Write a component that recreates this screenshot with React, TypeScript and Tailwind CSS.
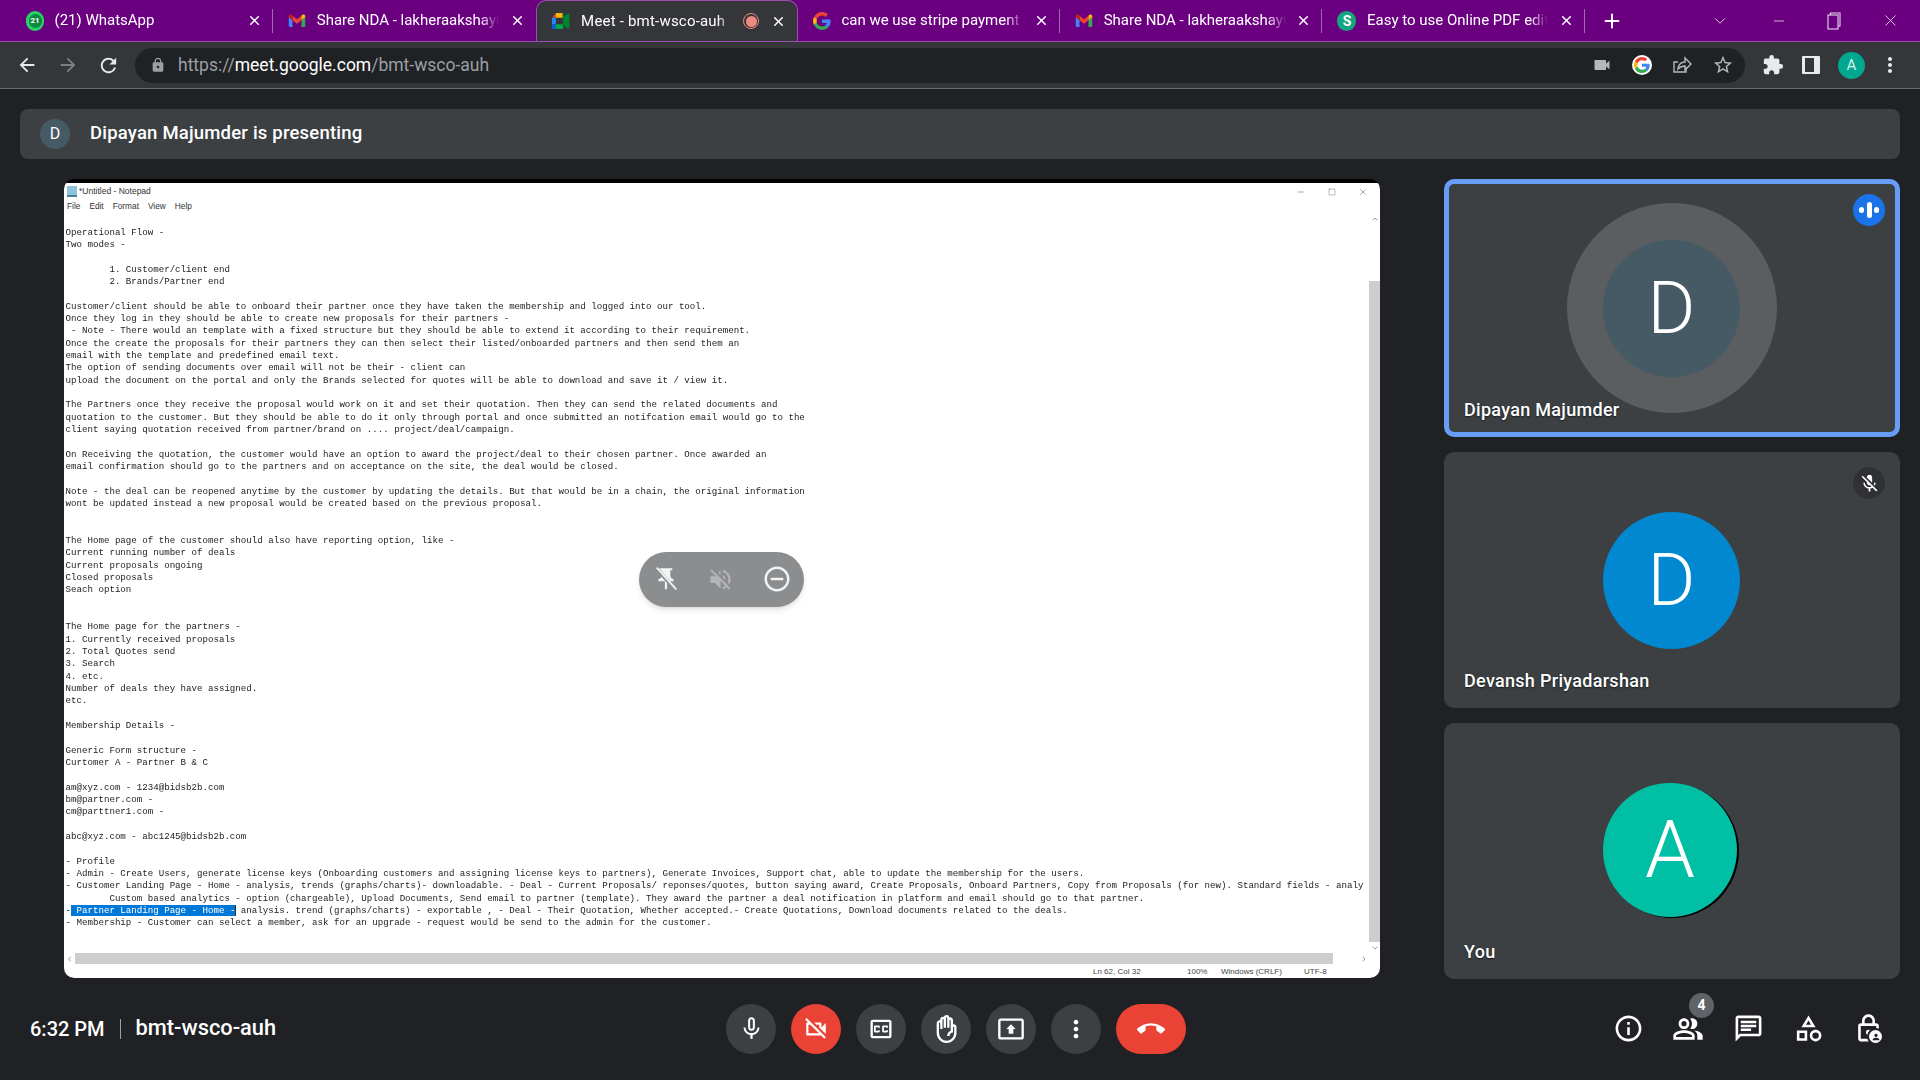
import React from 'react';
import { Minus, Plus, Square, X, ChevronDown, ChevronUp, ChevronLeft, ChevronRight } from 'lucide-react';
import {
  MdArrowBack, MdArrowForward, MdRefresh, MdLock, MdVideocam, MdStarBorder, MdExtension, MdMoreVert,
  MdVolumeOff, MdRemoveCircleOutline, MdMicOff, MdMicNone, MdOutlineVideocamOff, MdOutlineClosedCaption,
  MdOutlineFrontHand, MdOutlinePresentToAll, MdCallEnd, MdInfoOutline, MdOutlinePeopleAlt, MdOutlineChat,
  MdOutlineCategory, MdOutlineLock, MdPerson,
} from 'react-icons/md';

const ui = 'font-["Roboto",sans-serif]';

const GoogleG = ({ size = 18 }: { size?: number }) => (
  <svg width={size} height={size} viewBox="0 0 48 48" className="shrink-0">
    <path fill="#EA4335" d="M24 9.5c3.5 0 6.6 1.2 9.1 3.6l6.8-6.8C35.8 2.4 30.4 0 24 0 14.6 0 6.5 5.4 2.6 13.2l7.9 6.2C12.4 13.7 17.7 9.5 24 9.5z" />
    <path fill="#4285F4" d="M47 24.5c0-1.6-.1-3.100-.4-4.500H24v9h12.900c-.6 3-2.200 5.500-4.700 7.200l7.600 5.900C44.300 37.500 47 31.500 47 24.500z" />
    <path fill="#FBBC05" d="M10.500 28.600c-.5-1.400-.8-3-.8-4.600s.3-3.200.8-4.600l-7.900-6.200C.9 16.500 0 20.100 0 24s.9 7.500 2.600 10.800l7.900-6.200z" />
    <path fill="#34A853" d="M24 48c6.500 0 11.900-2.100 15.800-5.800l-7.600-5.900c-2.100 1.400-4.900 2.300-8.200 2.300-6.300 0-11.600-4.200-13.500-9.900l-7.900 6.200C6.500 42.600 14.600 48 24 48z" />
  </svg>
);

const GmailIcon = () => (
  <svg width="18" height="18" viewBox="0 0 24 24" className="shrink-0">
    <path fill="#4285F4" d="M2 20h4V11L1 7v11a2 2 0 0 0 1 2z" />
    <path fill="#34A853" d="M18 20h4a2 2 0 0 0 1-2V7l-5 4z" />
    <path fill="#EA4335" d="M6 11V5l6 4.500L18 5v6l-6 4.500z" />
    <path fill="#FBBC05" d="M18 5v6l5-4V5.500C23 3.500 20.500 2.500 19 3.700z" />
    <path fill="#C5221F" d="M1 7l5 4V5L5 3.700C3.500 2.500 1 3.500 1 5.500z" />
  </svg>
);

const MeetIcon = () => (
  <svg width="19" height="18" viewBox="0 0 24 22" className="shrink-0">
    <path fill="#EA4335" d="M5 1h9v6H0z" />
    <path fill="#2684FC" d="M0 7h5v8H0z" />
    <path fill="#0066DA" d="M0 15h5v6H2a2 2 0 0 1-2-2z" />
    <path fill="#FFBA00" d="M5 1h9v6H5z" />
    <path fill="#00AC47" d="M5 15h9v6H5z" />
    <path fill="#00832D" d="M14 6l5-4c1-.6 3-.5 3 1v16c0 1.500-2 1.600-3 1l-5-4z" />
    <path fill="#00AC47" d="M14 1v20h-1V1z" />
    <path fill="#35363a" d="M5 7h9v8H5z" />
  </svg>
);

const WhatsAppIcon = () => (
  <div className="w-[18px] h-[20px] rounded-full bg-[#25d366] flex items-center justify-center shrink-0">
    <span className="w-[13px] h-[14px] rounded-full bg-[#0b8a3e] text-white text-[8px] font-bold leading-[14px] text-center">21</span>
  </div>
);

const SmallpdfIcon = () => (
  <div className="w-[19px] h-[20px] rounded-full bg-[#13a67f] text-white text-[14px] leading-[20px] font-bold flex items-center justify-center shrink-0">S</div>
);

interface TabInfo {
  title: string;
  icon: React.ReactNode;
  active?: boolean;
  divider?: boolean;
}

const tabs: TabInfo[] = [
  { title: '(21) WhatsApp', icon: <WhatsAppIcon />, divider: true },
  { title: 'Share NDA - lakheraakshay0', icon: <GmailIcon /> },
  { title: 'Meet - bmt-wsco-auh', icon: <MeetIcon />, active: true },
  { title: 'can we use stripe payment o', icon: <GoogleG />, divider: true },
  { title: 'Share NDA - lakheraakshay0', icon: <GmailIcon />, divider: true },
  { title: 'Easy to use Online PDF edito', icon: <SmallpdfIcon />, divider: true },
];

const Tab = ({ tab }: { tab: TabInfo }) => (
  <div
    className={`relative w-[262.3px] h-[41px] shrink-0 flex items-center pl-[15px] pr-[11px] gap-[10.5px] text-white ${
      tab.active ? 'bg-[#35363a] rounded-t-[10px] border border-b-0 border-[#9c4fb0]' : ''
    }`}
  >
    {tab.icon}
    <span className={`flex-1 min-w-0 overflow-hidden whitespace-nowrap text-[15px] [mask-image:linear-gradient(to_right,black_90%,transparent)] ${tab.active ? 'tracking-[0.2px]' : ''}`}>
      {tab.title}
    </span>
    {tab.active && (
      <span className="w-[16px] h-[16px] rounded-full border border-[#f28b82] flex items-center justify-center shrink-0 mr-[1px]">
        <span className="w-[11px] h-[11px] rounded-full bg-[#ee8b80]" />
      </span>
    )}
    <X size={15} strokeWidth={2.4} className="shrink-0" />
    {tab.divider && <span className="absolute right-0 top-[9px] h-[24px] w-px bg-[#9d6bab]" />}
  </div>
);

const RestoreIcon = () => (
  <svg width="14" height="18" viewBox="0 0 14 18" fill="none" stroke="#e8d9ec" strokeWidth="1.100">
    <rect x="1" y="3" width="10" height="14" />
    <path d="M3.500 3V1H13v13h-2" />
  </svg>
);

const TabStrip = () => (
  <div className={`${ui} h-[42px] bg-[#6a0080] border-b border-[#9c4fb0] flex items-end pl-[11px] text-white`}>
    {tabs.map((t, i) => (
      <Tab key={i} tab={t} />
    ))}
    <div className="w-[54px] h-[41px] flex items-center justify-center">
      <Plus size={22} strokeWidth={2.2} />
    </div>
    <div className="flex-1 h-[41px] flex items-center justify-end pr-[20px] gap-[40px] text-[#e8d9ec]">
      <ChevronDown size={18} strokeWidth={1.2} className="mr-[2px]" />
      <Minus size={16} strokeWidth={1.2} />
      <RestoreIcon />
      <X size={19} strokeWidth={1.1} />
    </div>
  </div>
);

const ChromeShare = () => (
  <svg width="20" height="22" viewBox="0 0 20 22" fill="none" stroke="#b5b7ba" strokeWidth="1.4">
    <path d="M14 13v5H2V8h4" />
    <path d="M6 15c.5-4 3-7 7-7V4l6 6-6 6v-4c-3 0-5 1-7 3z" />
  </svg>
);

const Toolbar = () => (
  <div className={`${ui} h-[47px] bg-[#35363a] border-b border-[#6b6c70] flex items-center`}>
    <div className="w-[135px] flex items-center pl-[16px] gap-[19px] shrink-0">
      <MdArrowBack size={22} className="text-[#e8eaed]" />
      <MdArrowForward size={22} className="text-[#7d7f83]" />
      <MdRefresh size={23} className="text-[#e8eaed] -ml-[1px]" />
    </div>
    <div className="w-[1610px] h-[35px] rounded-full bg-[#202124] flex items-center pl-[15px] pr-[11px]">
      <MdLock size={16} className="text-[#9aa0a6]" />
      <span className="ml-[12px] text-[17.5px] text-[#9aa0a6] whitespace-nowrap">
        https://<span className="text-white">meet.google.com</span>/bmt-wsco-auh
      </span>
      <div className="ml-auto flex items-center gap-[20px]">
        <MdVideocam size={20} className="text-[#b5b7ba]" />
        <div className="w-[20px] h-[20px] rounded-full bg-white flex items-center justify-center">
          <GoogleG size={16} />
        </div>
        <ChromeShare />
        <MdStarBorder size={22} className="text-[#b5b7ba]" />
      </div>
    </div>
    <div className="flex-1 flex items-center pl-[17px] gap-[18px]">
      <MdExtension size={22} className="text-[#e8eaed]" />
      <div className="w-[18px] h-[18px] border-[2px] border-[#e8eaed] border-r-[6px] border-l-[3px] rounded-[1px]" />
      <div className="w-[27px] h-[27px] rounded-full bg-[#00a88f] text-[#d7f3ee] text-[15px] flex items-center justify-center">A</div>
      <MdMoreVert size={24} className="text-[#e8eaed] -ml-[5px]" />
    </div>
  </div>
);

const notepadLines = [
  'Operational Flow -',
  'Two modes -',
  '',
  '\t1. Customer/client end',
  '\t2. Brands/Partner end',
  '',
  'Customer/client should be able to onboard their partner once they have taken the membership and logged into our tool.',
  'Once they log in they should be able to create new proposals for their partners -',
  ' - Note - There would an template with a fixed structure but they should be able to extend it according to their requirement.',
  'Once the create the proposals for their partners they can then select their listed/onboarded partners and then send them an',
  'email with the template and predefined email text.',
  'The option of sending documents over email will not be their - client can',
  'upload the document on the portal and only the Brands selected for quotes will be able to download and save it / view it.',
  '',
  'The Partners once they receive the proposal would work on it and set their quotation. Then they can send the related documents and',
  'quotation to the customer. But they should be able to do it only through portal and once submitted an notifcation email would go to the',
  'client saying quotation received from partner/brand on .... project/deal/campaign.',
  '',
  'On Receiving the quotation, the customer would have an option to award the project/deal to their chosen partner. Once awarded an',
  'email confirmation should go to the partners and on acceptance on the site, the deal would be closed.',
  '',
  'Note - the deal can be reopened anytime by the customer by updating the details. But that would be in a chain, the original information',
  'wont be updated instead a new proposal would be created based on the previous proposal.',
  '',
  '',
  'The Home page of the customer should also have reporting option, like -',
  'Current running number of deals',
  'Current proposals ongoing',
  'Closed proposals',
  'Seach option',
  '',
  '',
  'The Home page for the partners -',
  '1. Currently received proposals',
  '2. Total Quotes send',
  '3. Search',
  '4. etc.',
  'Number of deals they have assigned.',
  'etc.',
  '',
  'Membership Details -',
  '',
  'Generic Form structure -',
  'Curtomer A - Partner B & C',
  '',
  'am@xyz.com - 1234@bidsb2b.com',
  'bm@partner.com -',
  'cm@parttner1.com -',
  '',
  'abc@xyz.com - abc1245@bidsb2b.com',
  '',
  '- Profile',
  '- Admin - Create Users, generate license keys (Onboarding customers and assigning license keys to partners), Generate Invoices, Support chat, able to update the membership for the users.',
  '- Customer Landing Page - Home - analysis, trends (graphs/charts)- downloadable. - Deal - Current Proposals/ reponses/quotes, button saying award, Create Proposals, Onboard Partners, Copy from Proposals (for new). Standard fields - analy',
  '\tCustom based analytics - option (chargeable), Upload Documents, Send email to partner (template). They award the partner a deal notification in platform and email should go to that partner.',
];

const NotepadWindow = () => (
  <div className="w-[1316px] bg-black pt-[4px] rounded-[10px] overflow-hidden">
    <div className="h-[795px] bg-white flex flex-col font-['Liberation_Sans',sans-serif] text-[#333]">
      <div className="h-[16px] flex items-center pl-[3px] pt-[1px] text-[8.5px] shrink-0">
        <span className="w-[10px] h-[11px] bg-[#8fc3dc] border-b-2 border-[#4f7f9a] mr-[2px]" />
        <span>*Untitled - Notepad</span>
        <div className="ml-auto flex items-center gap-[22px] pr-[12px] text-[#333]">
          <Minus size={10} strokeWidth={1} />
          <Square size={8} strokeWidth={1} />
          <X size={10} strokeWidth={1} />
        </div>
      </div>
      <div className="h-[14px] flex items-center pl-[3px] text-[8.3px] gap-[9px] shrink-0">
        <span>File</span>
        <span>Edit</span>
        <span>Format</span>
        <span>View</span>
        <span>Help</span>
      </div>
      <div className="flex-1 min-h-0 flex">
        <pre className="flex-1 min-w-0 overflow-hidden pl-[1.6px] pt-[13.8px] font-['Liberation_Mono',monospace] text-[9.15px] leading-[12.33px] [tab-size:8] text-[#222] blur-[0.3px]">
          {notepadLines.join('\n')}
          {'\n-'}
          <span className="bg-[#0078d7] text-white"> Partner Landing Page - Home -</span>
          <span className="inline-block w-px h-[11px] -mr-px bg-[#333] align-middle" />
          {' analysis. trend (graphs/charts) - exportable , - Deal - Their Quotation, Whether accepted.- Create Quotations, Download documents related to the deals.\n'}
          {'- Membership - Customer can select a member, ask for an upgrade - request would be send to the admin for the customer.'}
        </pre>
        <div className="w-[11px] shrink-0 flex flex-col items-center text-[#666]">
          <ChevronUp size={8} className="mt-[2px] mb-[58px] shrink-0" />
          <div className="w-full h-[661px] bg-[#cdcdcd] shrink-0" />
          <ChevronDown size={8} className="mt-[2px] shrink-0" />
        </div>
      </div>
      <div className="h-[11px] shrink-0 flex items-center text-[#666]">
        <ChevronLeft size={8} className="w-[11px] shrink-0" />
        <div className="w-[1258px] h-full bg-[#cdcdcd]" />
        <ChevronRight size={8} className="ml-[27px] shrink-0" />
      </div>
      <div className="h-[14px] pt-[2px] shrink-0 flex items-center text-[8px] text-[#444] whitespace-nowrap pl-[1029px]">
        <span className="w-[94px]">Ln 62, Col 32</span>
        <span className="w-[34px]">100%</span>
        <span className="w-[83px]">Windows (CRLF)</span>
        <span>UTF-8</span>
      </div>
    </div>
  </div>
);

const PinOff = () => (
  <svg width="26" height="26" viewBox="0 0 24 24" fill="#f1f3f4">
    <path d="M16 9V4h1c.55 0 1-.45 1-1s-.45-1-1-1H7c-.55 0-1 .45-1 1s.45 1 1 1h1v5c0 1.660-1.340 3-3 3v2h5.970v7l1 1 1-1v-7H19v-2c-1.660 0-3-1.340-3-3z" />
    <path d="M3 2l18 20" stroke="#8c8d8e" strokeWidth="3.500" />
    <path d="M3.500 1.500l18 20" stroke="#f1f3f4" strokeWidth="1.800" />
  </svg>
);

const PresentationControls = () => (
  <div className="absolute left-[575px] top-[372.5px] w-[165px] h-[55px] rounded-full bg-[#8c8d8e] shadow-md flex items-center pl-[14px] gap-[28px]">
    <PinOff />
    <MdVolumeOff size={27} className="text-[#b3b4b5]" />
    <MdRemoveCircleOutline size={30} className="text-[#f1f3f4]" />
  </div>
);

const SpeakingBadge = () => (
  <div className="absolute right-[10px] top-[10px] w-[32px] h-[32px] rounded-full bg-[#1a73e8] flex items-center justify-center gap-[2.5px]">
    <span className="w-[5px] h-[6px] rounded-full bg-white" />
    <span className="w-[5px] h-[16px] rounded-full bg-white" />
    <span className="w-[5px] h-[6px] rounded-full bg-white" />
  </div>
);

const MutedBadge = () => (
  <div className="absolute right-[15px] top-[15px] w-[32px] h-[32px] rounded-full bg-[#303134] flex items-center justify-center">
    <MdMicOff size={21} className="text-white" />
  </div>
);

const Tile = ({
  name,
  letter,
  avatarClass,
  height,
  speaking,
  muted,
  ringed,
}: {
  name: string;
  letter: string;
  avatarClass: string;
  height: string;
  speaking?: boolean;
  muted?: boolean;
  ringed?: boolean;
}) => (
  <div
    className={`relative ${height} rounded-[10px] bg-[#3c4043] flex items-center justify-center pr-[1px] ${
      speaking ? 'border-[5px] border-[#669df6]' : ''
    } ${ui}`}
  >
    {ringed && <div className="absolute left-1/2 top-1/2 w-[210px] h-[210px] -ml-[105px] -mt-[105px] rounded-full bg-[#5a5e61]" />}
    <div className={`relative rounded-full text-white font-light flex items-center justify-center ${avatarClass}`}>
      {letter}
    </div>
    {speaking && <SpeakingBadge />}
    {muted && <MutedBadge />}
    <span
      className={`absolute ${speaking ? 'left-[15px] bottom-[11px]' : 'left-[20px] bottom-[16px]'} text-white text-[18px] tracking-[0.3px] font-medium leading-[22px] [text-shadow:0_1px_2px_rgba(0,0,0,0.6)]`}
    >
      {name}
    </span>
  </div>
);

const Sidebar = () => (
  <div className="w-[456px] flex flex-col gap-[15px]">
    <Tile
      name="Dipayan Majumder"
      letter="D"
      avatarClass="w-[137px] h-[137px] bg-[#455a64] text-[73px] pt-[2px]"
      height="h-[258px]"
      speaking
      ringed
    />
    <Tile
      name="Devansh Priyadarshan"
      letter="D"
      avatarClass="w-[137px] h-[137px] bg-[#0288d1] text-[73px] pt-[2px]"
      height="h-[256px]"
      muted
    />
    <Tile
      name="You"
      letter="A"
      avatarClass="w-[134px] h-[134px] -ml-[3px] -mt-[2px] bg-[#00bfa5] text-[80px] shadow-[2px_1px_0_0_#000]"
      height="h-[256px]"
    />
  </div>
);

const RoundButton = ({ children, red, wide }: { children: React.ReactNode; red?: boolean; wide?: boolean }) => (
  <button className={`${wide ? 'w-[70px]' : 'w-[50px]'} h-[50px] rounded-full ${red ? 'bg-[#ea4335]' : 'bg-[#3c4043]'} text-white flex items-center justify-center`}>
    {children}
  </button>
);

const BottomBar = () => (
  <div className={`${ui} flex-1 flex items-center pb-[2px] text-white`}>
    <div className="w-[726px] shrink-0 pl-[30px] flex items-center text-[20px] font-medium whitespace-nowrap">
      <span>6:32 PM</span>
      <span className="w-px h-[20px] bg-[#9aa0a6] mx-[15px]" />
      <span className="text-[21.8px]">bmt-wsco-auh</span>
    </div>
    <div className="flex items-center gap-[15px]">
      <RoundButton><MdMicNone size={27} /></RoundButton>
      <RoundButton red><MdOutlineVideocamOff size={26} /></RoundButton>
      <RoundButton><MdOutlineClosedCaption size={28} /></RoundButton>
      <RoundButton><MdOutlineFrontHand size={28} /></RoundButton>
      <RoundButton><MdOutlinePresentToAll size={28} /></RoundButton>
      <RoundButton><MdMoreVert size={28} /></RoundButton>
      <RoundButton red wide><MdCallEnd size={28} /></RoundButton>
    </div>
    <div className="ml-auto flex items-center pr-[22px]">
      <div className="w-[60px] flex justify-center"><MdInfoOutline size={31} /></div>
      <div className="relative w-[60px] flex justify-center">
        <MdOutlinePeopleAlt size={32} />
        <span className="absolute left-[31px] -top-[20px] w-[25px] h-[25px] rounded-full bg-[#5f6368] text-[14px] font-bold flex items-center justify-center">4</span>
      </div>
      <div className="w-[60px] flex justify-center"><MdOutlineChat size={31} /></div>
      <div className="w-[60px] flex justify-center"><MdOutlineCategory size={31} /></div>
      <div className="relative w-[60px] flex justify-center">
        <MdOutlineLock size={31} />
        <span className="absolute left-[29px] top-[15px] w-[17px] h-[17px] rounded-full bg-white border-2 border-[#202124] flex items-center justify-center">
          <MdPerson size={10} className="text-[#202124]" />
        </span>
      </div>
    </div>
  </div>
);

export default function App() {
  return (
    <div className="w-[1920px] h-[1080px] bg-[#202124] flex flex-col overflow-hidden">
      <TabStrip />
      <Toolbar />
      <div className={`${ui} mx-[20px] mt-[20px] h-[50px] rounded-[8px] bg-[#3c4043] flex items-center pl-[20px] shrink-0`}>
        <div className="w-[30px] h-[30px] rounded-full bg-[#455a64] text-white text-[16px] flex items-center justify-center">D</div>
        <span className="ml-[20px] text-white text-[18.5px] tracking-[0.2px] font-medium">Dipayan Majumder is presenting</span>
      </div>
      <div className="mt-[20px] pl-[64px] flex gap-[64px] shrink-0">
        <div className="relative">
          <NotepadWindow />
          <PresentationControls />
        </div>
        <Sidebar />
      </div>
      <BottomBar />
    </div>
  );
}
